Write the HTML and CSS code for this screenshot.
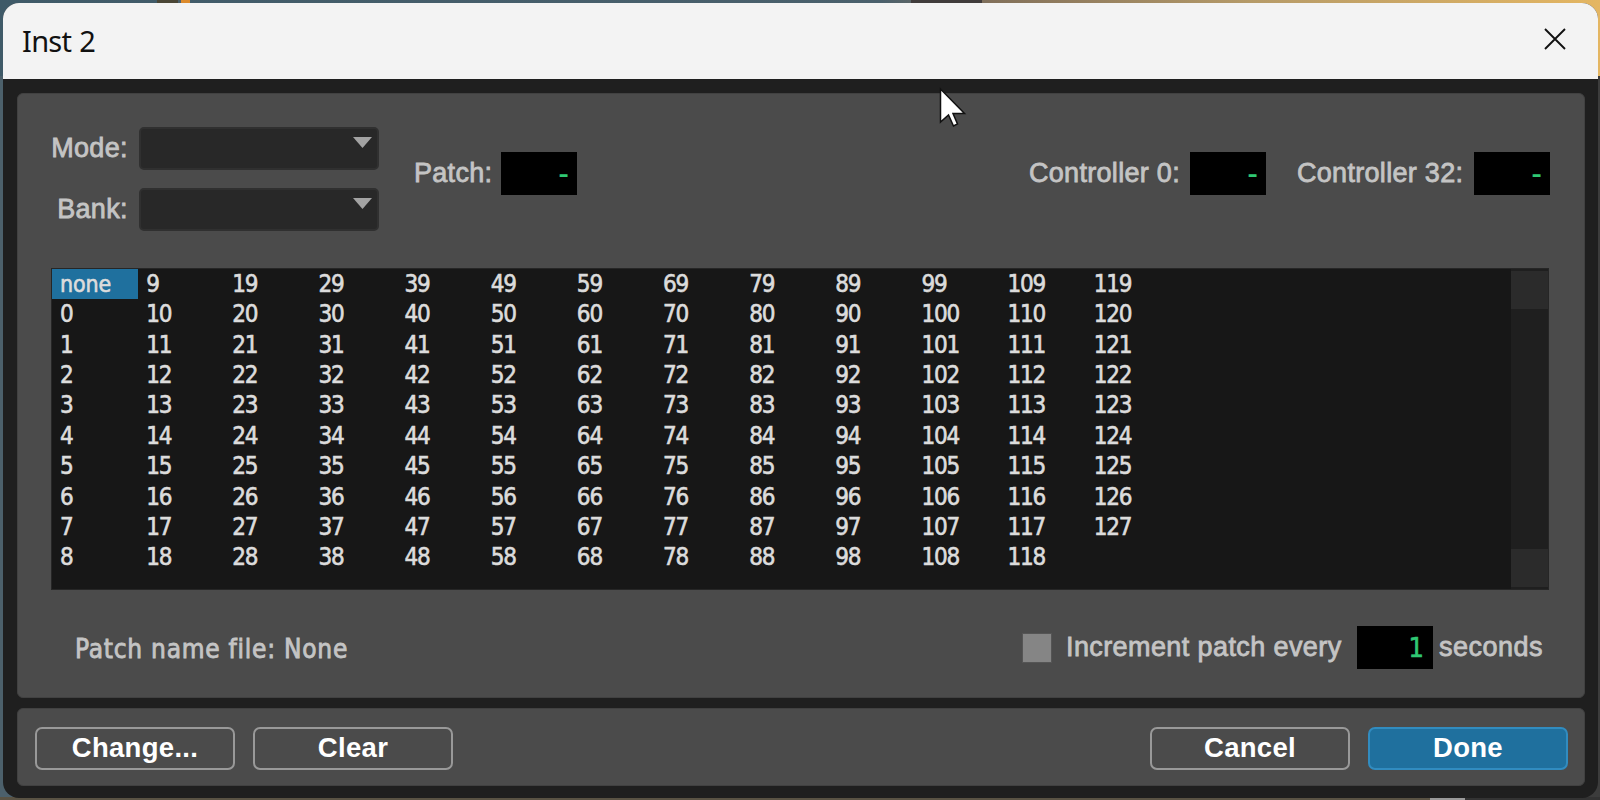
FILE: index.html
```html
<!DOCTYPE html>
<html lang="en">
<head>
    <meta charset="UTF-8">
    <meta name="viewport" content="width=device-width, initial-scale=1.0">
    <title>Inst 2</title>
    <link rel="stylesheet" href="styles.css">
</head>
<body>
    <div class="window">
        <header class="titlebar">
            <h1>Inst 2</h1>
            <button class="close" aria-label="Close">
                <svg width="22" height="22" viewBox="0 0 22 22"><path d="M1 1L21 21M21 1L1 21" stroke="#111" stroke-width="1.9" fill="none"/></svg>
            </button>
        </header>

        <main class="panel">
            <div class="controls">
                <div class="selects">
                    <div class="field"><label class="mode">Mode:</label><div class="select"></div></div>
                    <div class="field"><label class="bank">Bank:</label><div class="select"></div></div>
                </div>
                <div class="field patch"><label>Patch:</label><div class="value">-</div></div>
                <div class="field controller-0"><label>Controller 0:</label><div class="value">-</div></div>
                <div class="field controller-32"><label>Controller 32:</label><div class="value">-</div></div>
            </div>

            <div class="list">
                <div class="patches" id="patches"></div>
                <div class="scrollbar"><span></span><span></span></div>
            </div>

            <div class="options">
                <p class="file">Patch name file: None</p>
                <div class="increment">
                    <span class="checkbox"></span>
                    <label class="every">Increment patch every</label>
                    <div class="value number">1</div>
                    <label class="seconds">seconds</label>
                </div>
            </div>
        </main>

        <footer class="panel buttons">
            <button class="btn">Change...</button>
            <button class="btn">Clear</button>
            <button class="btn cancel">Cancel</button>
            <button class="btn primary">Done</button>
        </footer>
    </div>

    <svg class="cursor" width="28" height="42" viewBox="0 0 28 42"><path d="M1.5 2V35L9.5 28L14.5 39L18.5 37L14 26.5H25.5Z" fill="#fff" stroke="#111" stroke-width="1.5"/></svg>

    <script>
        const patches = document.getElementById('patches');
        // -1 is the "none" entry
        for (let i = -1; i < 128; i++) {
            const item = document.createElement('div');
            item.className = i < 0 ? 'item selected' : 'item';
            item.textContent = i < 0 ? 'none' : i;
            patches.appendChild(item);
        }
    </script>
</body>
</html>
```
FILE: styles.css
```css
* {
    box-sizing: border-box;
}

body {
    font-family: "Liberation Sans", Arial, sans-serif;
    font-size: 27px;
    margin: 0;
    padding: 3px 2px 2px 3px;
    height: 800px;
    overflow: hidden;
    color: #c4c4c4;
    background:
        linear-gradient(90deg, transparent 157px, #4a4636 157px 178px, #4a606c 178px 181px, #dc8a2c 181px 190px, transparent 190px 911px, #403c3b 911px 982px, transparent 982px) top / 100% 3px no-repeat,
        linear-gradient(90deg, #3f5a68 0, #4a606c 55%, #82705a 62%, #b59a68 78%, #e4b662 100%) top / 100% 76px no-repeat,
        linear-gradient(90deg, #5a5344 1430px, #999 1430px 1465px, #333 1465px) bottom / 100% 3px no-repeat,
        linear-gradient(90deg, #4c606b 50%, #3c3c3c 50%);
}

h1, p {
    margin: 0;
    font-weight: normal;
}

.window {
    height: 795px;
    background: #1f1f1f;
    border-radius: 16px;
    overflow: hidden;
}

.titlebar {
    display: flex;
    justify-content: space-between;
    height: 76px;
    padding: 0 32px 0 19px;
    background: #f3f3f3;
}

.titlebar h1 {
    font-family: "Noto Sans", sans-serif;
    font-size: 29px;
    line-height: 76px;
    letter-spacing: -0.7px;
    word-spacing: 1px;
    color: #111;
}

.close {
    padding: 1px 0 0;
    border: none;
    background: none;
    height: 70px;
}

.close svg {
    display: block;
}

.panel {
    width: 1568px;
    margin: 14px 0 0 14px;
    background: #4b4b4b;
    border: 1px solid #414141;
    border-radius: 6px;
}

main.panel {
    height: 605px;
}

.controls {
    display: flex;
    height: 174px;
    padding: 33px 34px 0 33px;
}

.selects {
    width: 328px;
}

.field {
    display: flex;
    align-items: center;
    height: 43px;
    white-space: nowrap;
}

label, .file {
    -webkit-text-stroke: 0.8px #c4c4c4;
}

label {
    letter-spacing: 0.3px;
}

.selects .field {
    margin-bottom: 18px;
}

.selects label {
    width: 77px;
    margin-right: 11px;
    text-align: right;
}

.select {
    width: 241px;
    height: 43px;
    padding: 8px 5px;
    background: #282828;
    border: 2px solid #303030;
    border-radius: 5px;
}

.select::after {
    content: "";
    display: block;
    width: 19px;
    height: 11px;
    margin-left: auto;
    background: #a3a3a3;
    clip-path: polygon(0 0, 100% 0, 50% 100%);
}

.value {
    width: 76px;
    height: 43px;
    padding-right: 8px;
    font-family: "DejaVu Sans Condensed", "DejaVu Sans", sans-serif;
    font-stretch: condensed;
    font-size: 33px;
    line-height: 43px;
    text-align: right;
    background: #000;
    color: #2fc873;
}

.number {
    padding-right: 9px;
    font-size: 27px;
    -webkit-text-stroke: 0.6px #2fc873;
}

.patch, .controller-0, .controller-32 {
    margin-top: 25px;
    justify-content: space-between;
}

.patch {
    width: 163px;
    margin-left: 35px;
}

.controller-0 {
    width: 237px;
    margin-left: auto;
}

.controller-32 {
    width: 253px;
    margin-left: 31px;
}

.list {
    display: flex;
    justify-content: space-between;
    width: 1498px;
    height: 322px;
    margin-left: 33px;
    background: #171717;
    border: 1px solid #262626;
}

.patches {
    display: grid;
    grid-template-rows: repeat(10, 30.37px);
    grid-auto-columns: 86.15px;
    grid-auto-flow: column;
    font-family: "DejaVu Sans Condensed", "DejaVu Sans", sans-serif;
    font-stretch: condensed;
    font-size: 24px;
    letter-spacing: -1.2px;
    color: #dcdcdc;
    -webkit-text-stroke: 0.6px #dcdcdc;
}

.item {
    padding-left: 8px;
    line-height: 30.37px;
}

.selected {
    background: #1f709e;
    font-size: 23px;
    letter-spacing: -0.1px;
}

.scrollbar {
    display: flex;
    flex-direction: column;
    justify-content: space-between;
    width: 37px;
    padding: 2px 0;
    background: #1f1f1f;
}

.scrollbar span {
    height: 38px;
    background: #2b2b2b;
}

.options {
    display: flex;
    justify-content: space-between;
    padding: 36px 41px 0 57px;
}

.file {
    font-family: "DejaVu Sans Condensed", "DejaVu Sans", sans-serif;
    font-stretch: condensed;
    font-size: 26px;
    line-height: 46px;
    letter-spacing: 0.75px;
}

.increment {
    display: flex;
    align-items: center;
    height: 43px;
}

.checkbox {
    width: 30px;
    height: 30px;
    background: #858585;
    border: 1px solid #555;
}

.every {
    width: 291px;
    margin-left: 14px;
    letter-spacing: 0.4px;
}

.seconds {
    width: 104px;
    margin-left: 6px;
    letter-spacing: 0.5px;
}

.buttons {
    display: flex;
    gap: 18px;
    height: 78px;
    margin-top: 10px;
    padding: 18px 16px 0 17px;
}

.btn {
    width: 200px;
    height: 43px;
    padding: 0 0 2px;
    font: bold 27.5px "Liberation Sans", Arial, sans-serif;
    letter-spacing: 0.3px;
    color: #fff;
    background: none;
    border: 2px solid #999;
    border-radius: 7px;
}

.cancel {
    margin-left: auto;
}

.primary {
    background: #1f709e;
    border-color: #318cc0;
}

.cursor {
    position: absolute;
    left: 939px;
    top: 87px;
}
```
